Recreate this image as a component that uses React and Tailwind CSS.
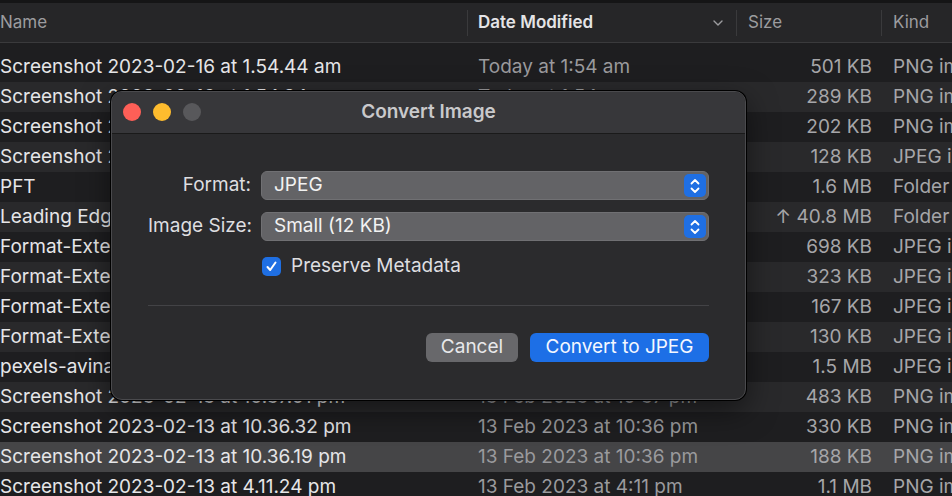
import React from "react";

const rows = [
  { name: "Screenshot 2023-02-16 at 1.54.44 am", date: "Today at 1:54 am", size: "501 KB", kind: "PNG image" },
  { name: "Screenshot 2023-02-16 at 1.54.34 am", date: "Today at 1:54 am", size: "289 KB", kind: "PNG image" },
  { name: "Screenshot 2023-02-16 at 1.53.10 am", date: "Today at 1:53 am", size: "202 KB", kind: "PNG image" },
  { name: "Screenshot 2023-02-16 at 1.52.08 am", date: "Today at 1:52 am", size: "128 KB", kind: "JPEG image" },
  { name: "PFT", date: "Yesterday at 11:20 pm", size: "1.6 MB", kind: "Folder" },
  { name: "Leading Edge", date: "Yesterday at 9:02 pm", size: "40.8 MB", kind: "Folder", up: true },
  { name: "Format-Extension-1.jpg", date: "14 Feb 2023 at 8:12 pm", size: "698 KB", kind: "JPEG image" },
  { name: "Format-Extension-2.jpg", date: "14 Feb 2023 at 8:12 pm", size: "323 KB", kind: "JPEG image" },
  { name: "Format-Extension-3.jpg", date: "14 Feb 2023 at 8:11 pm", size: "167 KB", kind: "JPEG image" },
  { name: "Format-Extension-4.jpg", date: "14 Feb 2023 at 8:11 pm", size: "130 KB", kind: "JPEG image" },
  { name: "pexels-avinash-patel.jpg", date: "14 Feb 2023 at 7:40 pm", size: "1.5 MB", kind: "JPEG image" },
  { name: "Screenshot 2023-02-13 at 10.37.01 pm", date: "13 Feb 2023 at 10:37 pm", size: "483 KB", kind: "PNG image" },
  { name: "Screenshot 2023-02-13 at 10.36.32 pm", date: "13 Feb 2023 at 10:36 pm", size: "330 KB", kind: "PNG image" },
  { name: "Screenshot 2023-02-13 at 10.36.19 pm", date: "13 Feb 2023 at 10:36 pm", size: "188 KB", kind: "PNG image", selected: true },
  { name: "Screenshot 2023-02-13 at 4.11.24 pm", date: "13 Feb 2023 at 4:11 pm", size: "1.1 MB", kind: "PNG image" },
];

const Stepper = () => (
  <div className="w-[22px] h-[23px] rounded-[5px] bg-[#1f6fe3] flex items-center justify-center">
    <svg width="12" height="16" viewBox="0 0 12 16" fill="none" stroke="#ffffff" strokeWidth="1.8" strokeLinecap="round" strokeLinejoin="round">
      <path d="M2.5 5.5 L6 2 L9.5 5.5" />
      <path d="M2.5 10.5 L6 14 L9.5 10.5" />
    </svg>
  </div>
);

const Select = ({ value }) => (
  <div className="w-[448px] shrink-0 h-[29px] rounded-[6px] bg-[#636366] border border-[#707073] flex items-center justify-between pl-[12px] pr-[2px] text-[19px] text-[#f2f2f2]">
    <span>{value}</span>
    <Stepper />
  </div>
);

export default function App() {
  return (
    <div className="relative w-[952px] h-[496px] overflow-hidden bg-[#1e1e20] font-['Inter',sans-serif]">
      {/* Header */}
      <div className="h-[3px] bg-[#151516]" />
      <div className="h-[40px] bg-[#262628] border-b border-[#3a3a3c] flex items-center text-[17px] text-[#9c9c9f] whitespace-nowrap">
        <div className="w-[467px] shrink-0">Name</div>
        <div className="w-[1px] h-[26px] bg-[#3a3a3c] shrink-0" />
        <div className="w-[268px] shrink-0 flex items-center justify-between pl-[10px] pr-[12px]">
          <span className="font-semibold text-[#e4e4e6]">Date Modified</span>
          <svg width="12" height="8" viewBox="0 0 12 8" fill="none" stroke="#9c9c9f" strokeWidth="1.4" strokeLinecap="round" strokeLinejoin="round">
            <path d="M2 2 L6 6 L10 2" />
          </svg>
        </div>
        <div className="w-[1px] h-[26px] bg-[#3a3a3c] shrink-0" />
        <div className="w-[144px] shrink-0 pl-[11px]">Size</div>
        <div className="w-[1px] h-[26px] bg-[#3a3a3c] shrink-0" />
        <div className="pl-[11px]">Kind</div>
      </div>
      <div className="h-[9px]" />

      {/* Rows */}
      <div className="flex flex-col">
        {rows.map((r, i) => (
          <div
            key={i}
            className={
              "h-[30px] flex items-center text-[19px] whitespace-nowrap " +
              (r.selected ? "bg-[#454547]" : i % 2 === 1 ? "bg-[#29292b]" : "bg-[#1e1e20]")
            }
          >
            <div className="w-[468px] shrink-0 overflow-hidden text-[#e6e6e8]">{r.name}</div>
            <div className="w-[270px] shrink-0 pl-[10px] overflow-hidden text-[#9a9a9d]">{r.date}</div>
            <div className="w-[134px] shrink-0 text-right text-[#a6a6a9]">
              {r.up ? "↑ " : ""}
              {r.size}
            </div>
            <div className="pl-[21px] shrink-0 text-[#a6a6a9]">{r.kind}</div>
          </div>
        ))}
      </div>

      {/* Dialog */}
      <div className="absolute left-[111px] top-[91px] w-[635px] h-[309px] rounded-[11px] bg-[#2b2b2d] border border-[#4a4a4d] shadow-[0_0_0_1px_#000000,0_10px_30px_rgba(0,0,0,0.5)] overflow-hidden flex flex-col">
        <div className="relative h-[42px] bg-[#37373a] border-b border-[#1a1a1a] flex items-center justify-center">
          <div className="absolute left-[11px] top-[11px] flex gap-[12px]">
            <div className="w-[18px] h-[18px] rounded-full bg-[#fe5f57]" />
            <div className="w-[18px] h-[18px] rounded-full bg-[#febc2e]" />
            <div className="w-[18px] h-[18px] rounded-full bg-[#58585b]" />
          </div>
          <span className="text-[19px] font-semibold text-[#c9c9cb]">Convert Image</span>
        </div>

        <div className="flex flex-col pl-[36px] pr-[36px] pt-[37px]">
          <div className="flex items-center">
            <div className="w-[113px] shrink-0 pr-[10px] text-right text-[19px] text-[#dedee0] whitespace-nowrap">Format:</div>
            <Select value="JPEG" />
          </div>
          <div className="flex items-center mt-[12px]">
            <div className="w-[113px] shrink-0 pr-[10px] text-right text-[19px] text-[#dedee0] whitespace-nowrap">Image Size:</div>
            <Select value="Small (12 KB)" />
          </div>
          <div className="flex items-center mt-[11px] pl-[114px] gap-[10px]">
            <div className="w-[19px] h-[19px] rounded-[5px] bg-[#1f6fe3] flex items-center justify-center">
              <svg width="13" height="13" viewBox="0 0 13 13" fill="none" stroke="#ffffff" strokeWidth="2" strokeLinecap="round" strokeLinejoin="round">
                <path d="M2.5 7 L5.2 10 L10.5 2.5" />
              </svg>
            </div>
            <span className="text-[19px] text-[#dedee0]">Preserve Metadata</span>
          </div>
          <div className="h-[1px] bg-[#434346] mt-[24px]" />
          <div className="flex justify-end gap-[12px] mt-[27px]">
            <button className="w-[92px] h-[29px] rounded-[6px] bg-[#68686b] text-[19px] text-[#e8e8ea]">Cancel</button>
            <button className="w-[179px] h-[29px] rounded-[6px] bg-[#1d6fe6] text-[19px] text-[#f4f7ff]">Convert to JPEG</button>
          </div>
        </div>
      </div>
    </div>
  );
}
